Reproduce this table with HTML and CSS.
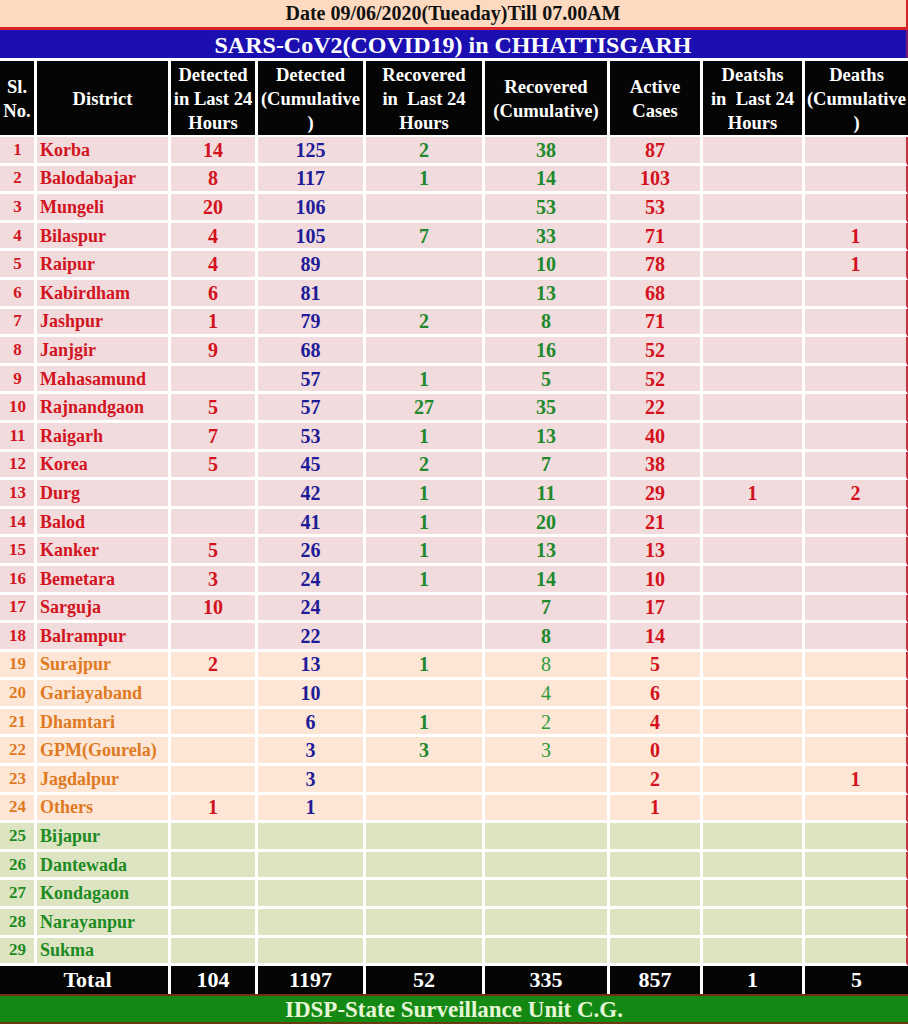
FILE: index.html
```html
<!DOCTYPE html>
<html lang="en">
<head>
<meta charset="utf-8">
<title>SARS-CoV2 (COVID19) in Chhattisgarh</title>
<link rel="stylesheet" href="styles.css">
</head>
<body>
<div class="sheet">
  <div class="date">Date 09/06/2020(Tueaday)Till 07.00AM</div>
  <div class="title">SARS-CoV2(COVID19) in CHHATTISGARH</div>
  <table class="grid">
    <thead>
      <tr class="hd">
        <th class="w1">Sl.<br>No.</th>
        <th class="w2">District</th>
        <th class="w3">Detected<br>in Last 24<br>Hours</th>
        <th class="w4">Detected<br>(Cumulative<br>)</th>
        <th class="w5">Recovered<br>in&nbsp; Last 24<br>Hours</th>
        <th class="w6">Recovered<br>(Cumulative)</th>
        <th class="w7">Active<br>Cases</th>
        <th class="w8">Deatshs<br>in&nbsp; Last 24<br>Hours</th>
        <th class="w9">Deaths<br>(Cumulative<br>)</th>
      </tr>
    </thead>
    <tbody>
      <tr class="pk"><td class="sl">1</td><td class="nm">Korba</td><td class="r">14</td><td class="b">125</td><td class="g">2</td><td class="g">38</td><td class="r">87</td><td></td><td class="r"></td></tr>
      <tr class="pk"><td class="sl">2</td><td class="nm">Balodabajar</td><td class="r">8</td><td class="b">117</td><td class="g">1</td><td class="g">14</td><td class="r">103</td><td></td><td class="r"></td></tr>
      <tr class="pk"><td class="sl">3</td><td class="nm">Mungeli</td><td class="r">20</td><td class="b">106</td><td class="g"></td><td class="g">53</td><td class="r">53</td><td></td><td class="r"></td></tr>
      <tr class="pk"><td class="sl">4</td><td class="nm">Bilaspur</td><td class="r">4</td><td class="b">105</td><td class="g">7</td><td class="g">33</td><td class="r">71</td><td></td><td class="r">1</td></tr>
      <tr class="pk"><td class="sl">5</td><td class="nm">Raipur</td><td class="r">4</td><td class="b">89</td><td class="g"></td><td class="g">10</td><td class="r">78</td><td></td><td class="r">1</td></tr>
      <tr class="pk"><td class="sl">6</td><td class="nm">Kabirdham</td><td class="r">6</td><td class="b">81</td><td class="g"></td><td class="g">13</td><td class="r">68</td><td></td><td class="r"></td></tr>
      <tr class="pk"><td class="sl">7</td><td class="nm">Jashpur</td><td class="r">1</td><td class="b">79</td><td class="g">2</td><td class="g">8</td><td class="r">71</td><td></td><td class="r"></td></tr>
      <tr class="pk"><td class="sl">8</td><td class="nm">Janjgir</td><td class="r">9</td><td class="b">68</td><td class="g"></td><td class="g">16</td><td class="r">52</td><td></td><td class="r"></td></tr>
      <tr class="pk"><td class="sl">9</td><td class="nm">Mahasamund</td><td class="r"></td><td class="b">57</td><td class="g">1</td><td class="g">5</td><td class="r">52</td><td></td><td class="r"></td></tr>
      <tr class="pk"><td class="sl">10</td><td class="nm">Rajnandgaon</td><td class="r">5</td><td class="b">57</td><td class="g">27</td><td class="g">35</td><td class="r">22</td><td></td><td class="r"></td></tr>
      <tr class="pk"><td class="sl">11</td><td class="nm">Raigarh</td><td class="r">7</td><td class="b">53</td><td class="g">1</td><td class="g">13</td><td class="r">40</td><td></td><td class="r"></td></tr>
      <tr class="pk"><td class="sl">12</td><td class="nm">Korea</td><td class="r">5</td><td class="b">45</td><td class="g">2</td><td class="g">7</td><td class="r">38</td><td></td><td class="r"></td></tr>
      <tr class="pk"><td class="sl">13</td><td class="nm">Durg</td><td class="r"></td><td class="b">42</td><td class="g">1</td><td class="g">11</td><td class="r">29</td><td class="r">1</td><td class="r">2</td></tr>
      <tr class="pk"><td class="sl">14</td><td class="nm">Balod</td><td class="r"></td><td class="b">41</td><td class="g">1</td><td class="g">20</td><td class="r">21</td><td></td><td class="r"></td></tr>
      <tr class="pk"><td class="sl">15</td><td class="nm">Kanker</td><td class="r">5</td><td class="b">26</td><td class="g">1</td><td class="g">13</td><td class="r">13</td><td></td><td class="r"></td></tr>
      <tr class="pk"><td class="sl">16</td><td class="nm">Bemetara</td><td class="r">3</td><td class="b">24</td><td class="g">1</td><td class="g">14</td><td class="r">10</td><td></td><td class="r"></td></tr>
      <tr class="pk"><td class="sl">17</td><td class="nm">Sarguja</td><td class="r">10</td><td class="b">24</td><td class="g"></td><td class="g">7</td><td class="r">17</td><td></td><td class="r"></td></tr>
      <tr class="pk"><td class="sl">18</td><td class="nm">Balrampur</td><td class="r"></td><td class="b">22</td><td class="g"></td><td class="g">8</td><td class="r">14</td><td></td><td class="r"></td></tr>
      <tr class="pc"><td class="sl">19</td><td class="nm">Surajpur</td><td class="r">2</td><td class="b">13</td><td class="g">1</td><td class="g lt">8</td><td class="r">5</td><td></td><td class="r"></td></tr>
      <tr class="pc"><td class="sl">20</td><td class="nm">Gariayaband</td><td class="r"></td><td class="b">10</td><td class="g"></td><td class="g lt">4</td><td class="r">6</td><td></td><td class="r"></td></tr>
      <tr class="pc"><td class="sl">21</td><td class="nm">Dhamtari</td><td class="r"></td><td class="b">6</td><td class="g">1</td><td class="g lt">2</td><td class="r">4</td><td></td><td class="r"></td></tr>
      <tr class="pc"><td class="sl">22</td><td class="nm">GPM(Gourela)</td><td class="r"></td><td class="b">3</td><td class="g">3</td><td class="g lt">3</td><td class="r">0</td><td></td><td class="r"></td></tr>
      <tr class="pc"><td class="sl">23</td><td class="nm">Jagdalpur</td><td class="r"></td><td class="b">3</td><td class="g"></td><td class="g"></td><td class="r">2</td><td></td><td class="r">1</td></tr>
      <tr class="pc"><td class="sl">24</td><td class="nm">Others</td><td class="r">1</td><td class="b">1</td><td class="g"></td><td class="g"></td><td class="r">1</td><td></td><td class="r"></td></tr>
      <tr class="gr"><td class="sl">25</td><td class="nm">Bijapur</td><td></td><td></td><td></td><td></td><td></td><td></td><td></td></tr>
      <tr class="gr"><td class="sl">26</td><td class="nm">Dantewada</td><td></td><td></td><td></td><td></td><td></td><td></td><td></td></tr>
      <tr class="gr"><td class="sl">27</td><td class="nm">Kondagaon</td><td></td><td></td><td></td><td></td><td></td><td></td><td></td></tr>
      <tr class="gr"><td class="sl">28</td><td class="nm">Narayanpur</td><td></td><td></td><td></td><td></td><td></td><td></td><td></td></tr>
      <tr class="gr"><td class="sl">29</td><td class="nm">Sukma</td><td></td><td></td><td></td><td></td><td></td><td></td><td></td></tr>
    </tbody>
    <tfoot>
      <tr class="tot">
        <td colspan="2">Total</td><td>104</td><td>1197</td><td>52</td><td>335</td><td>857</td><td>1</td><td>5</td>
      </tr>
    </tfoot>
  </table>
  <div class="foot">IDSP-State Surveillance Unit C.G.</div>
</div>
</body>
</html>
```

FILE: styles.css
```css
* { box-sizing: border-box; }

html, body {
  margin: 0;
  padding: 0;
  background: #ffffff;
}

body {
  font-family: "Liberation Serif", "Times New Roman", serif;
  font-weight: bold;
}

.sheet {
  width: 908px;
  height: 1024px;
  overflow: hidden;
}

.date {
  height: 30px;
  line-height: 27px;
  background: #fdd9bf;
  border-bottom: 3px solid #d9232b;
  border-right: 2px solid #d9232b;
  color: #111111;
  font-size: 20px;
  text-align: center;
}

.title {
  height: 28px;
  line-height: 30px;
  background: #1c0fb2;
  border-right: 2px solid #7a1a6a;
  color: #ffffff;
  font-size: 24px;
  text-align: center;
  margin-bottom: 3px;
}

.grid {
  width: 908px;
  table-layout: fixed;
  border-collapse: separate;
  border-spacing: 0;
}

.grid th,
.grid td {
  padding: 0;
  text-align: center;
  vertical-align: middle;
  border-right: 3px solid #ffffff;
  border-bottom: 3px solid #ffffff;
  white-space: nowrap;
  overflow: hidden;
}

.grid th:last-child,
.grid td:last-child {
  border-right: 2px solid #c8323c;
}

.hd th {
  background: #050505;
  color: #ffffff;
  font-size: 18.6px;
  line-height: 24px;
  height: 76px;
  padding-top: 2px;
  border-bottom-width: 2px;
}

.hd th:last-child { border-right: none; }

.w1 { width: 37px; }
.w2 { width: 134px; }
.w3 { width: 87px; }
.w4 { width: 108px; }
.w5 { width: 119px; }
.w6 { width: 125px; }
.w7 { width: 93px; }
.w8 { width: 102px; }
.w9 { width: 103px; }

tbody tr { height: 28.6px; }

tbody td {
  font-size: 20px;
  line-height: 20px;
  padding-top: 1px;
}

tbody td.sl {
  font-size: 17px;
  padding-left: 1px;
}

tbody td.nm {
  text-align: left;
  padding-left: 3px;
  font-size: 18px;
}

.pk td { background: #f2dbdc; }
.pc td { background: #fde6d6; }
.gr td { background: #dce4c2; }

.pk .sl, .pk .nm { color: #d1141f; }
.pc .sl, .pc .nm { color: #df7a22; }
.gr .sl, .gr .nm { color: #1e8a22; }

.r { color: #d3121d; }
.b { color: #1f1c98; }
.g { color: #20892c; }
.g.lt { font-weight: normal; color: #2e9a3a; }

.tot td {
  height: 28px;
  background: #050505;
  color: #ffffff;
  font-size: 22px;
  line-height: 22px;
  border-bottom: none;
}

.tot td:first-child { padding-left: 7px; }

.tot td:last-child { border-right: none; }

.foot {
  height: 30px;
  line-height: 27px;
  background: #138913;
  border-top: 2px solid #7a2c12;
  border-bottom: 2px solid #6a3a10;
  color: #e6f5d6;
  font-size: 23px;
  text-align: center;
}
```
